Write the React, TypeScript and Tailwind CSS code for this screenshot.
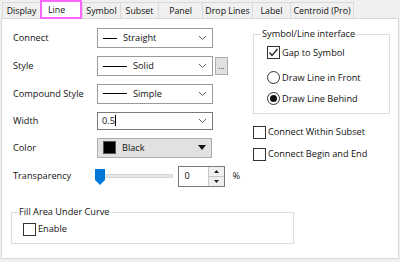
import React from "react";

const tabs = [
  { label: "Display", w: 38 },
  { label: "Line", w: 42, active: true },
  { label: "Symbol", w: 38 },
  { label: "Subset", w: 38 },
  { label: "Panel", w: 44 },
  { label: "Drop Lines", w: 50 },
  { label: "Label", w: 38 },
  { label: "Centroid (Pro)", w: 64 },
];

const Chevron = () => (
  <svg width="9" height="6" viewBox="0 0 9 6" className="mr-[5px]">
    <polyline points="1,1 4.5,4.5 8,1" fill="none" stroke="#606060" strokeWidth="1" />
  </svg>
);

const Select = ({ line, text, lineW }: { line?: boolean; text: string; lineW: number }) => (
  <div className="flex items-center justify-between w-[116px] h-[20px] border border-[#9a9a9a] bg-white">
    <div className="flex items-center">
      {line && <div className="h-[1px] bg-black ml-[5px]" style={{ width: lineW }} />}
      <span className="ml-[6px]">{text}</span>
    </div>
    <Chevron />
  </div>
);

const CheckBox = ({ checked }: { checked?: boolean }) => (
  <div className="w-[13px] h-[13px] border border-[#333] bg-white flex items-center justify-center shrink-0">
    {checked && (
      <svg width="11" height="11" viewBox="0 0 11 11">
        <polyline points="1.5,5.5 4,8.5 9.5,2" fill="none" stroke="#222" strokeWidth="1.3" />
      </svg>
    )}
  </div>
);

const Radio = ({ checked }: { checked?: boolean }) => (
  <div className="w-[13px] h-[13px] rounded-full border border-[#333] bg-white flex items-center justify-center shrink-0">
    {checked && <div className="w-[7px] h-[7px] rounded-full bg-[#111]" />}
  </div>
);

const Row = ({ label, h, children }: { label: string; h: string; children: React.ReactNode }) => (
  <div className={`flex items-center ${h}`}>
    <span className="w-[84px]">{label}</span>
    {children}
  </div>
);

export default function App() {
  return (
    <div className="w-[400px] h-[262px] bg-[#f0f0f0] font-['Open_Sans',sans-serif] text-[9.2px] text-[#111] leading-[14px] overflow-hidden">
      {/* tabs */}
      <div className="flex items-end h-[18px] pl-[2px] text-[8.8px] whitespace-nowrap">
        {tabs.map((t, i) =>
          t.active ? (
            <div
              key={t.label}
              className="relative z-10 -mb-[1px] h-[19px] border-2 border-[#ff66ff] bg-white flex items-center pl-[6px]"
              style={{ width: t.w }}
            >
              {t.label}
            </div>
          ) : (
            <div
              key={t.label}
              className={`h-[16px] border-t border-l border-[#d9d9d9] bg-[#f0f0f0] flex items-center justify-center ${
                i === tabs.length - 1 ? "border-r" : ""
              }`}
              style={{ width: t.w }}
            >
              {t.label}
            </div>
          )
        )}
      </div>

      {/* panel */}
      <div className="mx-[1px] w-[398px] h-[241px] border border-[#d9d9d9] bg-white">
        <div className="flex">
          {/* left column */}
          <div className="w-[238px] pl-[11px] pt-[5px]">
            <Row label="Connect" h="h-[28px]">
              <Select line text="Straight" lineW={14} />
            </Row>
            <Row label="Style" h="h-[28px]">
              <Select line text="Solid" lineW={24} />
              <div className="ml-[2px] w-[13px] h-[18px] border border-[#adadad] bg-[#e1e1e1] flex items-center justify-center text-[8px] leading-none">
                ...
              </div>
            </Row>
            <Row label="Compound Style" h="h-[27px]">
              <Select line text="Simple" lineW={24} />
            </Row>
            <Row label="Width" h="h-[27px]">
              <div className="flex items-center justify-between w-[116px] h-[18px] border border-[#7a7a7a] bg-white">
                <div className="flex items-center ml-[4px]">
                  <span>0.5</span>
                  <div className="w-[1px] h-[11px] bg-black" />
                </div>
                <Chevron />
              </div>
            </Row>
            <Row label="Color" h="h-[27px]">
              <div className="flex items-center justify-between w-[115px] h-[20px] border border-[#adadad] bg-[#e1e1e1]">
                <div className="flex items-center">
                  <div className="ml-[5px] w-[13px] h-[13px] bg-black border border-[#555]" />
                  <span className="ml-[6px]">Black</span>
                </div>
                <svg width="8" height="5" viewBox="0 0 8 5" className="mr-[5px]">
                  <polygon points="0,0 8,0 4,5" fill="#111" />
                </svg>
              </div>
            </Row>
            <Row label="Transparency" h="h-[30px]">
              <div className="flex items-center w-[85px]">
                <div className="relative w-[78px] h-[4px] bg-[#e7e7e7] border border-[#d6d6d6]">
                  <svg width="10" height="16" viewBox="0 0 10 16" className="absolute -left-[1px] -top-[6px]">
                    <path d="M0 0 H10 V11 L5 16 L0 11 Z" fill="#0078d7" />
                  </svg>
                </div>
              </div>
              <div className="flex w-[48px] h-[21px] border border-[#7a7a7a] bg-white">
                <span className="flex-1 pl-[5px] flex items-center">0</span>
                <div className="w-[16px] flex flex-col border-l border-[#c8c8c8]">
                  <div className="flex-1 bg-[#f0f0f0] border-b border-[#c8c8c8] flex items-center justify-center">
                    <svg width="5" height="3" viewBox="0 0 5 3">
                      <polygon points="0,3 5,3 2.5,0" fill="#222" />
                    </svg>
                  </div>
                  <div className="flex-1 bg-[#f0f0f0] flex items-center justify-center">
                    <svg width="5" height="3" viewBox="0 0 5 3">
                      <polygon points="0,0 5,0 2.5,3" fill="#222" />
                    </svg>
                  </div>
                </div>
              </div>
              <span className="ml-[7px]">%</span>
            </Row>
          </div>

          {/* right column */}
          <div className="ml-[13px] w-[137px] pt-[8px]">
            <fieldset className="border border-[#dcdcdc] px-[13px] pb-[4px]">
              <legend className="px-[1px] -ml-[6px]">Symbol/Line interface</legend>
              <div className="mt-[1px] h-[21px] flex items-center gap-[2px]">
                <CheckBox checked />
                <span>Gap to Symbol</span>
              </div>
              <div className="mt-[4px] h-[21px] flex items-center gap-[2px]">
                <Radio />
                <span>Draw Line in Front</span>
              </div>
              <div className="h-[21px] flex items-center gap-[2px]">
                <Radio checked />
                <span>Draw Line Behind</span>
              </div>
            </fieldset>
            <div className="mt-[8px] h-[20px] flex items-center gap-[2px]">
              <CheckBox />
              <span>Connect Within Subset</span>
            </div>
            <div className="mt-[2px] h-[20px] flex items-center gap-[2px]">
              <CheckBox />
              <span>Connect Begin and End</span>
            </div>
          </div>
        </div>

        {/* fill area */}
        <fieldset className="ml-[9px] mt-[14px] w-[283px] border border-[#dcdcdc] px-[11px] pb-[4px]">
          <legend className="px-[1px] -ml-[5px]">Fill Area Under Curve</legend>
          <div className="h-[20px] flex items-center gap-[2px]">
            <CheckBox />
            <span>Enable</span>
          </div>
        </fieldset>
      </div>
    </div>
  );
}
